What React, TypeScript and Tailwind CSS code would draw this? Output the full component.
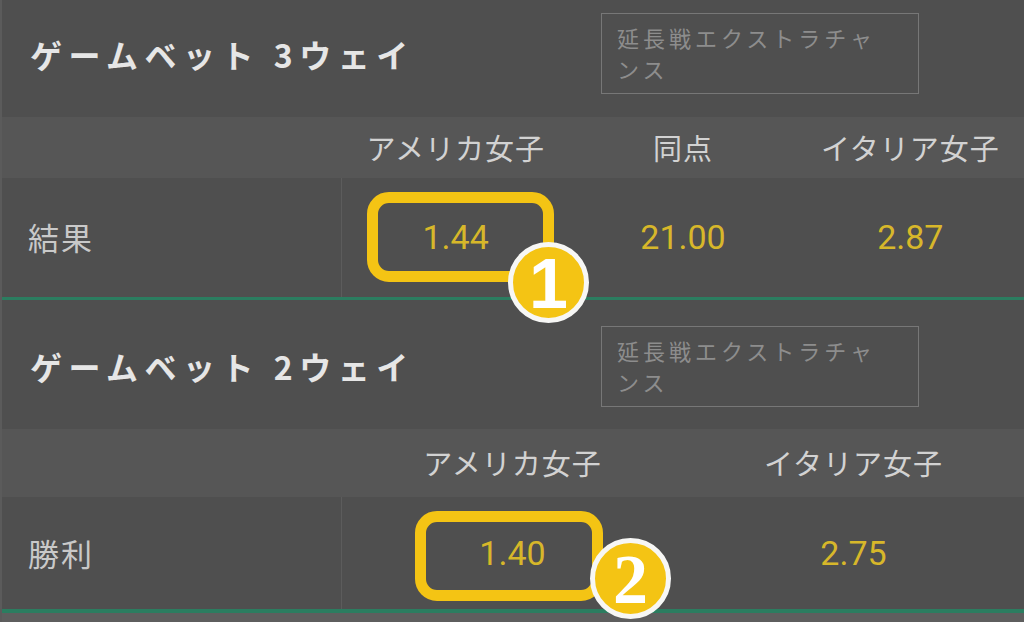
import React from "react";

const jp = { fontFamily: '"Noto Sans CJK JP", "Noto Sans", sans-serif' };
const num = { fontFamily: 'Roboto, "Liberation Sans", sans-serif' };

function Header({ title, h, pad }: { title: string; h: string; pad: string }) {
  return (
    <div className={`flex items-center ${h} ${pad}`}>
      <div
        className="pl-[28px] text-[32px] font-bold tracking-[6.5px] text-[#e6e6e6] leading-none"
        style={jp}
      >
        {title}
      </div>
      <div
        className="ml-auto mr-[105px] w-[318px] h-[81px] border-[1.5px] border-[#777777] pl-[15px] pt-[8px] pr-[30px] text-[22px] leading-[31px] tracking-[4px] text-[#8d8d8d]"
        style={jp}
      >
        延長戦エクストラチャンス
      </div>
    </div>
  );
}

function Badge({ n, serif }: { n: string; serif?: boolean }) {
  return (
    <div className="w-[81px] h-[81px] rounded-full bg-[#f4c414] border-[5px] border-[#f7f7f5] flex items-center justify-center">
      <span
        className="text-white font-bold leading-none"
        style={
          serif
            ? { fontFamily: '"Liberation Serif", serif', fontSize: 70, marginTop: 2 }
            : { fontFamily: '"Liberation Sans", sans-serif', fontSize: 70, marginTop: 2 }
        }
      >
        {n}
      </span>
    </div>
  );
}

export default function App() {
  return (
    <div className="relative w-[1024px] h-[622px] overflow-hidden bg-[#4f4f4f] border-l-2 border-[#5b5b5b] flex flex-col">
      {/* Section 1 */}
      <Header title="ゲームベット 3ウェイ" h="h-[117px]" pad="pb-[10px]" />
      <div
        className="h-[61px] bg-[#565656] grid grid-cols-[340px_1fr_1fr_1fr] items-center text-center text-[29px] tracking-[1px] text-[#d2d2d2]"
        style={jp}
      >
        <div />
        <div>アメリカ女子</div>
        <div>同点</div>
        <div>イタリア女子</div>
      </div>
      <div className="h-[119px] grid grid-cols-[340px_1fr_1fr_1fr] items-center text-center">
        <div
          className="h-full flex items-center pl-[26px] text-[31px] tracking-[2px] text-[#c9c9c9] border-r border-[#5c5c5c]"
          style={jp}
        >
          結果
        </div>
        <div className="text-[34px] text-[#d7b72a]" style={num}>1.44</div>
        <div className="text-[34px] text-[#d7b72a]" style={num}>21.00</div>
        <div className="text-[34px] text-[#d7b72a]" style={num}>2.87</div>
      </div>
      <div className="h-[3px] bg-[#2b7d60]" />

      {/* Section 2 */}
      <Header title="ゲームベット 2ウェイ" h="h-[129px]" pad="pt-[3px]" />
      <div
        className="h-[68px] bg-[#565656] grid grid-cols-[340px_1fr_1fr] items-center text-center text-[29px] tracking-[1px] text-[#d2d2d2]"
        style={jp}
      >
        <div />
        <div>アメリカ女子</div>
        <div>イタリア女子</div>
      </div>
      <div className="h-[112px] grid grid-cols-[340px_1fr_1fr] items-center text-center">
        <div
          className="h-full flex items-center pl-[26px] text-[31px] tracking-[2px] text-[#c9c9c9] border-r border-[#5c5c5c]"
          style={jp}
        >
          勝利
        </div>
        <div className="text-[34px] text-[#d7b72a]" style={num}>1.40</div>
        <div className="text-[34px] text-[#d7b72a]" style={num}>2.75</div>
      </div>
      <div className="h-[4px] bg-[#2b7d60]" />
      <div className="flex-1 bg-[#5e5e5e]" />

      {/* Annotations */}
      <div className="absolute left-[365px] top-[192px] w-[187px] h-[90px] border-[11px] border-[#f4c414] rounded-[22px]" />
      <div className="absolute left-[506px] top-[242px]">
        <Badge n="1" />
      </div>
      <div className="absolute left-[413px] top-[511px] w-[188px] h-[90px] border-[11px] border-[#f4c414] rounded-[22px]" />
      <div className="absolute left-[588px] top-[538px]">
        <Badge n="2" serif />
      </div>
    </div>
  );
}
